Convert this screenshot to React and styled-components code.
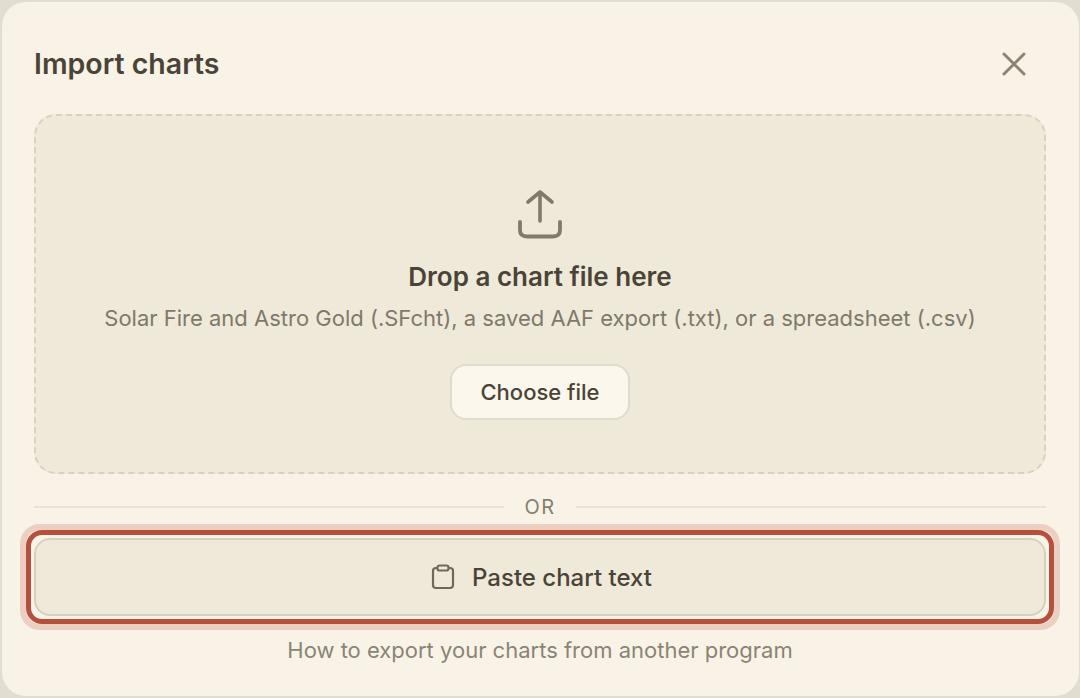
import React from "react";
import styled, { createGlobalStyle } from "styled-components";

const Global = createGlobalStyle`
  html, body { margin: 0; padding: 0; background: #e2ddd1; }
  body { font-family: Inter, "Noto Sans", sans-serif; -webkit-font-smoothing: antialiased; }
  * { box-sizing: border-box; }
`;

const Page = styled.div`
  width: 1080px;
  height: 698px;
  padding: 2px 1px 2px 2px;
  overflow: hidden;
`;

const Modal = styled.div`
  width: 1077px;
  height: 694px;
  background: #f9f3e7;
  border-radius: 24px;
  padding: 0 33px 0 32px;
  display: flex;
  flex-direction: column;
`;

const Header = styled.header`
  height: 112px;
  padding-top: 42px;
  display: flex;
  justify-content: space-between;
  align-items: flex-start;
`;

const Title = styled.h2`
  margin: 0;
  font-size: 28.5px;
  line-height: 40px;
  font-weight: 600;
  color: #4a4337;
`;

const CloseButton = styled.button`
  border: 0;
  background: none;
  padding: 0;
  width: 36px;
  height: 36px;
  margin: 2px 14px 0 0;
  display: flex;
  align-items: center;
  justify-content: center;
  color: #8a8475;
`;

const DropZone = styled.div`
  height: 360px;
  background: #efe9da;
  border: 2px dashed #d8d1bf;
  border-radius: 22px;
  display: flex;
  flex-direction: column;
  align-items: center;
  padding-top: 71px;
`;

const UploadIcon = styled.svg`
  width: 48px;
  height: 54px;
  color: #807a6b;
  display: block;
`;

const DropTitle = styled.div`
  margin-top: 18px;
  font-size: 26px;
  line-height: 36px;
  font-weight: 600;
  color: #4a4337;
`;

const DropHint = styled.div`
  margin-top: 7px;
  font-size: 22px;
  line-height: 32px;
  color: #7f7969;
`;

const ChooseButton = styled.button`
  margin-top: 30px;
  width: 180px;
  height: 56px;
  background: #fbf7ec;
  border: 2px solid #e0dbcc;
  border-radius: 16px;
  font: 500 22px Inter, sans-serif;
  color: #4a4337;
`;

const Divider = styled.div`
  margin-top: 19px;
  height: 28px;
  display: flex;
  align-items: center;
  gap: 20px;
  font-size: 20px;
  letter-spacing: 1.5px;
  color: #857f70;
`;

const Rule = styled.span`
  flex: 1;
  height: 2px;
  background: #e8e2d4;
`;

const PasteButton = styled.button`
  position: relative;
  margin-top: 17px;
  height: 78px;
  width: 100%;
  flex: none;
  background: #efe9da;
  border: 2px solid #d6d0c0;
  border-radius: 16px;
  padding: 0 0 0 3px;
  display: flex;
  align-items: center;
  justify-content: center;
  gap: 17px;
  font: 500 24px Inter, sans-serif;
  color: #4a4337;

  &::before {
    content: "";
    position: absolute;
    inset: -16px;
    border: 6px solid #edcfc2;
    border-radius: 20px;
  }

  &::after {
    content: "";
    position: absolute;
    inset: -10px;
    border: 5px solid #b5503c;
    border-radius: 16px;
  }
`;

const HelpLine = styled.div`
  margin-top: 18px;
  text-align: center;
  font-size: 22px;
  line-height: 32px;
  color: #8a8475;
`;

export default function App() {
  return (
    <Page>
      <Global />
      <Modal>
        <Header>
          <Title>Import charts</Title>
          <CloseButton aria-label="Close">
            <svg width="24" height="24" viewBox="0 0 24 24" fill="none" stroke="currentColor" strokeWidth="3" strokeLinecap="round">
              <path d="M2 2 L22 22 M22 2 L2 22" />
            </svg>
          </CloseButton>
        </Header>
        <DropZone>
          <UploadIcon viewBox="0 0 48 54" fill="none" stroke="currentColor" strokeWidth="3.6" strokeLinecap="round" strokeLinejoin="round">
            <path d="M24 34 V5 M12 15 L24 5 L36 15" />
            <path d="M4 35 V43 Q4 49.5 11 49.5 H37 Q44 49.5 44 43 V35" strokeWidth="3.8" />
          </UploadIcon>
          <DropTitle>Drop a chart file here</DropTitle>
          <DropHint>Solar Fire and Astro Gold (.SFcht), a saved AAF export (.txt), or a spreadsheet (.csv)</DropHint>
          <ChooseButton>Choose file</ChooseButton>
        </DropZone>
        <Divider>
          <Rule />
          OR
          <Rule />
        </Divider>
        <PasteButton>
          <svg width="24" height="26" viewBox="0 0 24 26" fill="none" stroke="#6f6959" strokeWidth="2.2" strokeLinejoin="round">
            <rect x="2" y="4" width="20" height="20" rx="3" />
            <rect x="6.5" y="1.5" width="11" height="5" rx="2" fill="#efe9da" />
          </svg>
          Paste chart text
        </PasteButton>
        <HelpLine>How to export your charts from another program</HelpLine>
      </Modal>
    </Page>
  );
}
